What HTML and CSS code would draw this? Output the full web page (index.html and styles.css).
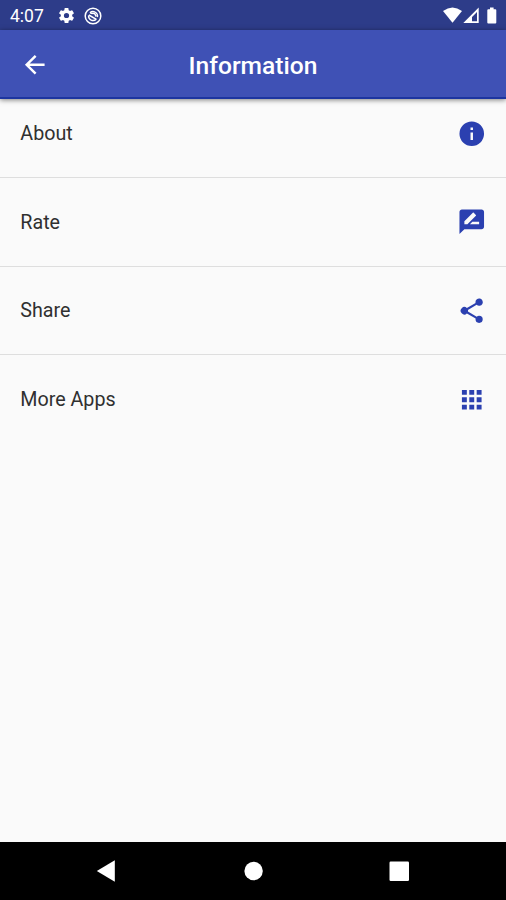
FILE: index.html
```html
<!DOCTYPE html>
<html lang="en">
<head>
<meta charset="utf-8">
<title>Information</title>
<link rel="stylesheet" href="styles.css">
</head>
<body>
<div class="screen">
  <div class="status">
    <span class="clock">4:07</span>
    <svg class="gear" viewBox="0 0 24 24"><path d="M19.140 12.940c.04-.3.060-.61.060-.940s-.02-.64-.07-.94l2.030-1.580a.49.49 0 0 0 .12-.61l-1.920-3.320a.49.49 0 0 0-.59-.22l-2.390.960a7 7 0 0 0-1.620-.94l-.36-2.540A.48.48 0 0 0 13.920 2.400h-3.840a.48.48 0 0 0-.47.410l-.36 2.540a7.200 7.200 0 0 0-1.620.940l-2.390-.96a.48.48 0 0 0-.59.220L2.740 8.870a.48.48 0 0 0 .12.610l2.030 1.580a6 6 0 0 0 0 1.880l-2.030 1.580a.49.49 0 0 0-.12.610l1.920 3.320c.12.220.37.290.59.220l2.390-.96c.5.380 1.030.700 1.620.940l.36 2.540c.05.240.240.410.480.410h3.840c.24 0 .44-.17.470-.41l.36-2.540a7 7 0 0 0 1.620-.94l2.390.960c.22.080.47 0 .59-.22l1.920-3.320a.48.48 0 0 0-.12-.61zM12 15.300a3.300 3.300 0 1 1 0-6.600 3.300 3.300 0 0 1 0 6.600z"/></svg>
    <svg class="sync" viewBox="0 0 18 18"><g fill="none" stroke="#fff"><circle cx="9" cy="9" r="7.800" stroke-width="1.500"/><path d="M4.600 8.500A4.500 4.500 0 0 0 12.200 12.200M5.900 5.700A4.600 4.600 0 0 1 13.400 10.200" stroke-width="1.400"/><path d="M4.800 8L12.400 12.400M6.300 6.200L10.500 6.400L12.300 9.500" stroke-width="1.500"/></g></svg>
    <svg class="signals" viewBox="0 0 56 18"><path d="M0 4.100Q9.500-3.300 19 4.100L9.500 15.800z"/><path fill-rule="evenodd" d="M20.300 16L35.700.6V16zM29 14.300h5V4.900l-5 5z"/><path d="M45.300 2.300h1.700V.4h3.600v1.900h1.700q1 0 1 1V15.500q0 1-1 1h-7q-1 0-1-1V3.300q0-1 1-1z"/></svg>
  </div>
  <header class="appbar">
    <svg class="icon back" viewBox="0 0 24 24"><path d="M20 11H7.830l5.590-5.590L12 4l-8 8 8 8 1.410-1.410L7.830 13H20z"/></svg>
    <h1>Information</h1>
  </header>
  <main class="list">
    <div class="row first"><span>About</span><svg class="icon" viewBox="0 0 24 24"><path d="M12 2a10 10 0 1 0 0 20 10 10 0 0 0 0-20zm1 15h-2v-6h2zm0-8h-2V7h2z"/></svg></div>
    <div class="row"><span>Rate</span><svg class="icon" viewBox="0 0 24 24"><path d="M20 2H4c-1.100 0-1.990.9-1.990 2L2 22l4-4h14c1.100 0 2-.9 2-2V4c0-1.100-.9-2-2-2zM6 14v-2.470l6.880-6.880c.2-.2.510-.2.710 0l1.770 1.770c.2.200.2.510 0 .710L8.470 14zm12 0h-7.500l2-2H18z"/></svg></div>
    <div class="row"><span>Share</span><svg class="icon" viewBox="0 0 24 24"><path d="M18 16.080c-.76 0-1.440.3-1.960.770L8.910 12.700c.05-.23.090-.46.090-.7s-.04-.47-.09-.7l7.050-4.110A3 3 0 1 0 15 5c0 .240.040.470.090.700L8.040 9.810a3 3 0 1 0 0 4.380l7.120 4.160c-.05.210-.08.430-.08.650A2.920 2.920 0 1 0 18 16.080z"/></svg></div>
    <div class="row"><span>More Apps</span><svg class="icon" viewBox="0 0 24 24"><path d="M4 8h4V4H4zm6 12h4v-4h-4zm-6 0h4v-4H4zm0-6h4v-4H4zm6 0h4v-4h-4zm6-10v4h4V4zm-6 4h4V4h-4zm6 6h4v-4h-4zm0 6h4v-4h-4z"/></svg></div>
  </main>
  <nav class="nav">
    <svg viewBox="0 0 506 58"><path d="M96.800 29L114.800 18.300V39.700z"/><circle cx="253.600" cy="29" r="9.200"/><rect x="389.500" y="19.500" width="19.500" height="19.500" rx="1.200"/></svg>
  </nav>
</div>
</body>
</html>
```
FILE: styles.css
```css
body {
  margin: 0;
  font-family: Roboto, "Liberation Sans", sans-serif;
}

svg {
  display: block;
  flex: none;
  fill: #fff;
}

.screen {
  display: flex;
  flex-direction: column;
  height: 900px;
  overflow: hidden;
  background: #fafafa;
}

.status {
  display: flex;
  align-items: center;
  flex: none;
  box-sizing: border-box;
  height: 30px;
  padding: 1px 7px 0 10px;
  background: #2d3c89;
  color: #fff;
}

.clock {
  width: 46.5px;
  font-size: 17.5px;
  line-height: 30px;
}

.gear {
  width: 19px;
  height: 19px;
}

.sync {
  width: 18px;
  height: 18px;
  margin-left: 8.5px;
}

.signals {
  width: 56px;
  height: 18px;
  margin-left: auto;
}

.appbar {
  position: relative;
  display: grid;
  grid-template-columns: 50px 1fr 50px;
  align-items: center;
  flex: none;
  box-sizing: border-box;
  height: 69px;
  padding-top: 2px;
  border-bottom: 2px solid #1d35a0;
  background: #3f51b5;
  box-shadow: 0 1px 5px rgba(0, 0, 0, 0.5);
}

.appbar h1 {
  margin: 3px 0 0;
  color: #fff;
  font-size: 24.6px;
  font-weight: 500;
  line-height: 30px;
  text-align: center;
}

.icon {
  width: 29.5px;
  height: 29.5px;
}

.back {
  margin-left: 20px;
}

.list {
  flex: 1;
}

.row {
  display: flex;
  align-items: center;
  justify-content: space-between;
  box-sizing: border-box;
  height: 88.6px;
  padding: 0.5px 19px 0 20.3px;
  border-bottom: 1.5px solid #dedede;
  color: #303030;
  font-size: 19.7px;
}

.row:last-child {
  padding-top: 0;
  border-bottom: 0;
}

.row .icon {
  margin-right: 0.3px;
  fill: #2b40b0;
}

.first {
  height: 79px;
  padding-bottom: 10px;
}

.nav {
  flex: none;
  height: 58px;
  background: #000;
}
```
